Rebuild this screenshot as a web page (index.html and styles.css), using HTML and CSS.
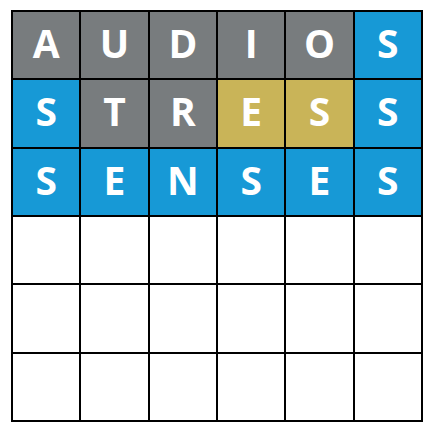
FILE: index.html
```html
<!DOCTYPE html>
<html lang="en">
<head>
<meta charset="utf-8">
<title>Board</title>
<link rel="stylesheet" href="styles.css">
</head>
<body>
<div class="board">
  <div class="tile absent">A</div>
  <div class="tile absent">U</div>
  <div class="tile absent">D</div>
  <div class="tile absent">I</div>
  <div class="tile absent">O</div>
  <div class="tile correct">S</div>

  <div class="tile correct">S</div>
  <div class="tile absent">T</div>
  <div class="tile absent">R</div>
  <div class="tile present">E</div>
  <div class="tile present">S</div>
  <div class="tile correct">S</div>

  <div class="tile correct">S</div>
  <div class="tile correct">E</div>
  <div class="tile correct">N</div>
  <div class="tile correct">S</div>
  <div class="tile correct">E</div>
  <div class="tile correct">S</div>

  <div class="tile"></div><div class="tile"></div><div class="tile"></div>
  <div class="tile"></div><div class="tile"></div><div class="tile"></div>
  <div class="tile"></div><div class="tile"></div><div class="tile"></div>
  <div class="tile"></div><div class="tile"></div><div class="tile"></div>
  <div class="tile"></div><div class="tile"></div><div class="tile"></div>
  <div class="tile"></div><div class="tile"></div><div class="tile"></div>
</div>
</body>
</html>
```
FILE: styles.css
```css
html, body {
  margin: 0;
  padding: 0;
  background: #ffffff;
}

body {
  padding: 10px 0 0 11px;
  font-family: "Open Sans", "Noto Sans", "DejaVu Sans", sans-serif;
}

.board {
  box-sizing: border-box;
  width: 412px;
  height: 412px;
  display: grid;
  grid-template-columns: repeat(6, 1fr);
  grid-template-rows: repeat(6, 1fr);
  gap: 2px;
  padding: 2px;
  background: #000000;
}

.tile {
  background: #ffffff;
  color: #ffffff;
  display: flex;
  align-items: center;
  justify-content: center;
  font-weight: 700;
  font-size: 39px;
  line-height: 1;
  padding-bottom: 5px;
}

.absent {
  background: #787c7e;
}

.present {
  background: #c9b458;
}

.correct {
  background: #1799d6;
}
```
